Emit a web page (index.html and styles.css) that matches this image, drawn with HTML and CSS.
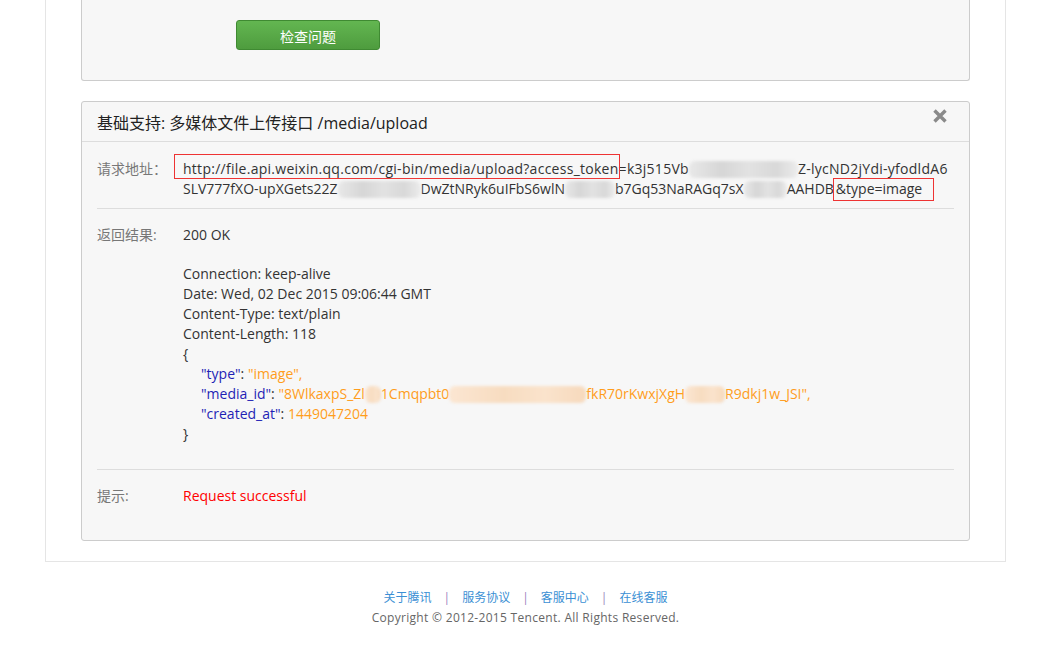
FILE: index.html
```html
<!DOCTYPE html>
<html lang="zh-CN">
<head>
    <meta charset="UTF-8">
    <title>微信公众平台接口调试工具</title>
    <link rel="stylesheet" href="styles.css">
</head>
<body>
    <div class="page">
        <div class="main">
            <!-- form panel, scrolled partly out of view -->
            <div class="panel panel-form">
                <button class="btn-check" type="button">检查问题</button>
            </div>

            <div class="panel">
                <div class="panel-head">
                    <span class="panel-title">基础支持: 多媒体文件上传接口 /media/upload</span>
                    <span class="close" title="关闭">
                        <svg width="14" height="14" viewBox="0 0 14 14">
                            <path d="M1.5 1.5 L12.5 12.5 M12.5 1.5 L1.5 12.5" stroke="#8a8a8a" stroke-width="3.4"/>
                        </svg>
                    </span>
                </div>
                <div class="panel-body">
                    <div class="row row-url">
                        <div class="label">请求地址：</div>
                        <div class="value url">
                            <span class="line line-first"><span class="mark mark-a">http://file.api.weixin.qq.com/cgi-bin/media/upload?access_token</span>=k3j515Vb<span class="mosaic w109"></span>Z-lycND2jYdi-yfodldA6</span>
                            <span class="line">SLV777fXO-upXGets22Z<span class="mosaic w83"></span>DwZtNRyk6uIFbS6wlN<span class="mosaic w50"></span>b7Gq53NaRAGq7sX<span class="mosaic w43"></span>AAHDB<span class="mark mark-b">&amp;type=image</span></span>
                        </div>
                    </div>
                    <div class="row row-result">
                        <div class="label">返回结果:</div>
                        <div class="value">
                            <div>200 OK</div>
                            <div class="gap"></div>
                            <div>Connection: keep-alive</div>
                            <div>Date: Wed, 02 Dec 2015 09:06:44 GMT</div>
                            <div>Content-Type: text/plain</div>
                            <div>Content-Length: 118</div>
                            <div>{</div>
                            <div class="json-item"><span class="key">"type"</span>: <span class="str">"image",</span></div>
                            <div class="json-item"><span class="key">"media_id"</span>: <span class="str">"8WlkaxpS_Zl<span class="mosaic warm w16"></span>1Cmqpbt0<span class="mosaic warm w137"></span>fkR70rKwxjXgH<span class="mosaic warm w40"></span>R9dkj1w_JSI",</span></div>
                            <div class="json-item"><span class="key">"created_at"</span>: <span class="num">1449047204</span></div>
                            <div>}</div>
                        </div>
                    </div>
                    <div class="row row-tip">
                        <div class="label">提示:</div>
                        <div class="value tip-ok">Request successful</div>
                    </div>
                </div>
            </div>
        </div>

        <div class="footer">
            <div class="footer-links">
                <a href="#">关于腾讯</a><span class="sep">|</span><a href="#">服务协议</a><span class="sep">|</span><a href="#">客服中心</a><span class="sep">|</span><a href="#">在线客服</a>
            </div>
            <div class="copyright">Copyright © 2012-2015 Tencent. All Rights Reserved.</div>
        </div>
    </div>
</body>
</html>
```

FILE: styles.css
```css
body {
    margin: 0;
    background: #fff;
    font-family: "Open Sans", "Noto Sans CJK SC", sans-serif;
    font-size: 14px;
    color: #333;
}
.page {
    width: 961px;
    margin-left: 45px;
}
.main {
    border: 1px solid #e5e5e5;
    border-top: none;
    padding: 0 35px 20px;
}
.panel {
    background: #f7f7f7;
    border: 1px solid #ccc;
    border-radius: 3px;
    margin-top: 20px;
}
.panel-form {
    margin-top: 0;
    border-top: none;
    border-radius: 0 0 3px 3px;
    padding: 20px 0 30px 154px;
}
.btn-check {
    display: block;
    width: 144px;
    height: 30px;
    background: linear-gradient(#63b651, #4e9c3e);
    border: 1px solid #3f8a32;
    border-radius: 3px;
    color: #fff;
    font-family: "Noto Sans CJK SC", sans-serif;
    font-size: 14px;
    padding: 2px 0 0;
}
.panel-head {
    display: flex;
    justify-content: space-between;
    align-items: center;
    height: 39px;
    padding: 0 22px 0 15px;
    border-bottom: 1px solid #ddd;
}
.panel-title {
    font-size: 16px;
    color: #222;
}
.close {
    display: flex;
    margin-top: -12px;
}
.panel-body {
    padding: 0 15px 34px;
}
.row {
    display: flex;
    line-height: 20px;
}
.row + .row {
    border-top: 1px solid #ddd;
}
.row-url {
    padding: 17px 0 9px;
}
.row-result {
    padding: 16px 0 25px;
}
.row-tip {
    padding: 16px 0 0;
}
.label {
    width: 86px;
    flex: none;
    color: #777;
}
.value {
    flex: 1;
}
.url .line {
    display: block;
    white-space: nowrap;
}
.url .line-first {
    letter-spacing: 0.27px;
}
.mark {
    outline: 1px solid #e33;
}
.mark-a {
    padding: 4px 0 0 8px;
    margin-left: -8px;
}
.mark-b {
    padding: 0 11px 2px 2px;
}
.mosaic {
    display: inline-block;
    height: 17px;
    vertical-align: -4px;
    background: linear-gradient(90deg, #e8e8e8, #d6d6d6 30%, #e2e2e2 55%, #d8d8d8 80%, #ececec);
    filter: blur(1.5px);
    border-radius: 6px;
}
.mosaic.warm {
    background: linear-gradient(90deg, #fbe6d2, #f7dcc0 40%, #fae3cc 70%, #f6d9bc);
}
.w16 { width: 16px; }
.w40 { width: 40px; }
.w43 { width: 43px; }
.w50 { width: 50px; }
.w83 { width: 83px; }
.w109 { width: 109px; }
.w137 { width: 137px; }
.gap {
    height: 19px;
}
.json-item {
    padding-left: 18px;
}
.key {
    color: #1f1fb5;
}
.str,
.num {
    color: #ff9d1c;
}
.tip-ok {
    color: #f00;
}
.footer {
    text-align: center;
    font-size: 12px;
    line-height: 20px;
    padding-top: 26px;
}
.footer-links a {
    color: #3b8fd4;
    text-decoration: none;
}
.sep {
    color: #9a7fbd;
    margin: 0 12px;
}
.copyright {
    color: #666;
    letter-spacing: 0.3px;
}
```
